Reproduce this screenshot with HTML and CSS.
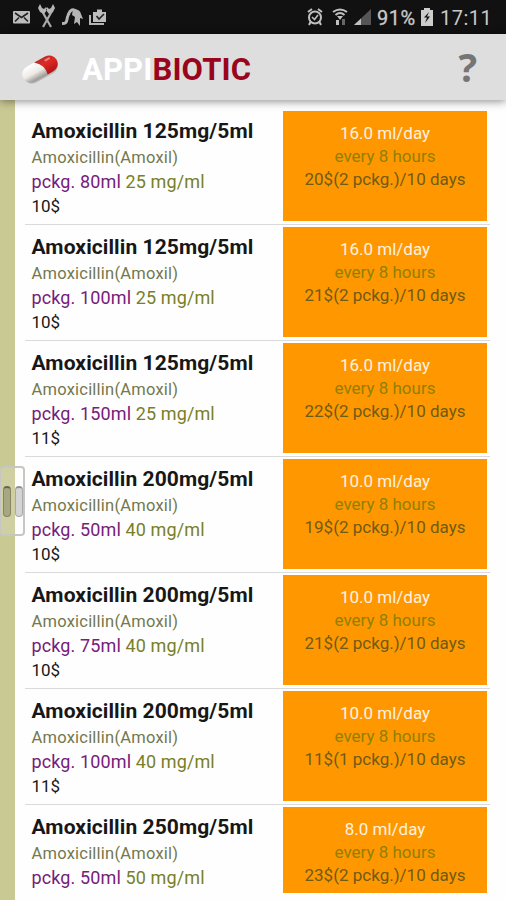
FILE: index.html
```html
<!DOCTYPE html>
<html lang="en">
<head>
<meta charset="utf-8">
<title>Appibiotic</title>
<link rel="stylesheet" href="styles.css">
</head>
<body>
<div class="statusbar">
  <svg class="notices" width="96" height="32" viewBox="0 0 96 32">
    <rect x="1" y="11" width="17" height="12.500" rx="1" fill="#bdbdbd"/>
    <path d="M3 13l6.500 4.500L16 13M3 21.500l4-4M16 21.500l-4-4" fill="none" stroke="#222" stroke-width="1.600"/>
    <path d="M30 11L39 27M40 11L31 27" fill="none" stroke="#aaa" stroke-width="2.200"/>
    <path d="M28 4l-2 4 2 4 4 2 3-4-1-3-2 2-2-1zM41 4l2 4-2 4-4 2-3-4 1-3 2 2 2-1z" fill="#b5b5b5"/>
    <path d="M50 23.500c6 0 4-3 6-8 2-6 6-8 8-3" fill="none" stroke="#b5b5b5" stroke-width="3"/>
    <path d="M61 9q7 0 8 5l2 5-3-1v8l-3-4-3 2 1-7-3-2z" fill="#b5b5b5"/>
    <path d="M78 15v9h14" fill="none" stroke="#b5b5b5" stroke-width="2"/>
    <path d="M81 12h4V9.500h5V12h4v10H81z" fill="#bdbdbd"/>
    <path d="M84.500 16l2.500 3 5-5" fill="none" stroke="#222" stroke-width="1.600"/>
  </svg>
  <svg class="signals" width="66" height="32" viewBox="0 0 66 32">
    <g fill="none" stroke="#c0c0c0">
      <circle cx="9" cy="17.500" r="6" stroke-width="2"/>
      <path d="M2 12l4-3M16 12l-4-3M4.500 22L3 25M13.500 22l1.500 3" stroke-width="2"/>
      <path d="M6 17l2.500 2.500L12 15" stroke-width="1.600"/>
      <path d="M27 12q7-5 14 0M29.500 15q4.500-4 9 0" stroke-width="2"/>
    </g>
    <path d="M31 16h6l-3 4zM30 20h3v5h-3z" fill="#c0c0c0"/>
    <path d="M36 19h3v6h-3z" fill="#666"/>
    <path d="M65 9v16H48z" fill="#555"/>
    <path d="M55 18.500V25h-7z" fill="#c0c0c0"/>
  </svg>
  <span class="percent">91%</span>
  <svg class="battery" width="12" height="18" viewBox="0 0 12 18">
    <path d="M0 2h3V0h6v2h3v16H0z" fill="#cdcdcd"/>
    <path d="M8 4L3 9.500h3L4 15l5-6.500H6z" fill="#111"/>
  </svg>
  <span class="clock">17:11</span>
</div>
<header class="appbar">
  <svg class="pill" width="40" height="34" viewBox="0 0 40 34">
    <defs>
      <linearGradient id="white" x1="0" y1="0" x2="0" y2="1"><stop offset="0" stop-color="#fff"/><stop offset=".55" stop-color="#eeeae5"/><stop offset="1" stop-color="#969390"/></linearGradient>
      <linearGradient id="red" x1="0" y1="0" x2="0" y2="1"><stop offset="0" stop-color="#b52e2b"/><stop offset=".35" stop-color="#df2925"/><stop offset="1" stop-color="#b51212"/></linearGradient>
    </defs>
    <g transform="rotate(-29 20 17)">
      <rect x="1.500" y="9.500" width="37" height="17.500" rx="8.700" fill="#777" opacity=".4"/>
      <path d="M24 8.500H9.500a8.500 8.500 0 0 0 0 17H24z" fill="url(#white)"/>
      <path d="M18 8.500h12.500a8.500 8.500 0 0 1 0 17H24q3-9-6-17z" fill="url(#red)"/>
      <path d="M29 12h4" stroke="#f78079" stroke-width="2" stroke-linecap="round"/>
    </g>
  </svg>
  <h1 class="brand"><span class="brand-light">APPI</span>BIOTIC</h1>
  <span class="help">?</span>
</header>
<div class="content">
  <aside class="rail"><div class="handle"><i class="grip"></i><i class="grip grip-light"></i></div></aside>
  <main class="list">
    <article class="row"><div class="drug"><h2>Amoxicillin 125mg/5ml</h2><p class="generic">Amoxicillin(Amoxil)</p><p class="pack">pckg. 80ml <span class="strength">25 mg/ml</span></p><p class="price">10$</p></div><div class="dose"><p class="volume">16.0 ml/day</p><p class="interval">every 8 hours</p><p class="course">20$(2 pckg.)/10 days</p></div></article>
    <article class="row"><div class="drug"><h2>Amoxicillin 125mg/5ml</h2><p class="generic">Amoxicillin(Amoxil)</p><p class="pack">pckg. 100ml <span class="strength">25 mg/ml</span></p><p class="price">10$</p></div><div class="dose"><p class="volume">16.0 ml/day</p><p class="interval">every 8 hours</p><p class="course">21$(2 pckg.)/10 days</p></div></article>
    <article class="row"><div class="drug"><h2>Amoxicillin 125mg/5ml</h2><p class="generic">Amoxicillin(Amoxil)</p><p class="pack">pckg. 150ml <span class="strength">25 mg/ml</span></p><p class="price">11$</p></div><div class="dose"><p class="volume">16.0 ml/day</p><p class="interval">every 8 hours</p><p class="course">22$(2 pckg.)/10 days</p></div></article>
    <article class="row"><div class="drug"><h2>Amoxicillin 200mg/5ml</h2><p class="generic">Amoxicillin(Amoxil)</p><p class="pack">pckg. 50ml <span class="strength">40 mg/ml</span></p><p class="price">10$</p></div><div class="dose"><p class="volume">10.0 ml/day</p><p class="interval">every 8 hours</p><p class="course">19$(2 pckg.)/10 days</p></div></article>
    <article class="row"><div class="drug"><h2>Amoxicillin 200mg/5ml</h2><p class="generic">Amoxicillin(Amoxil)</p><p class="pack">pckg. 75ml <span class="strength">40 mg/ml</span></p><p class="price">10$</p></div><div class="dose"><p class="volume">10.0 ml/day</p><p class="interval">every 8 hours</p><p class="course">21$(2 pckg.)/10 days</p></div></article>
    <article class="row"><div class="drug"><h2>Amoxicillin 200mg/5ml</h2><p class="generic">Amoxicillin(Amoxil)</p><p class="pack">pckg. 100ml <span class="strength">40 mg/ml</span></p><p class="price">11$</p></div><div class="dose"><p class="volume">10.0 ml/day</p><p class="interval">every 8 hours</p><p class="course">11$(1 pckg.)/10 days</p></div></article>
    <article class="row row-last"><div class="drug"><h2>Amoxicillin 250mg/5ml</h2><p class="generic">Amoxicillin(Amoxil)</p><p class="pack">pckg. 50ml <span class="strength">50 mg/ml</span></p></div><div class="dose"><p class="volume">8.0 ml/day</p><p class="interval">every 8 hours</p><p class="course">23$(2 pckg.)/10 days</p></div></article>
  </main>
</div>
</body>
</html>
```
FILE: styles.css
```css
* { box-sizing: border-box; }
body { margin: 0; height: 900px; overflow: hidden; background: #fefefe; font-family: Roboto, sans-serif; color: #171717; display: flex; flex-direction: column; }
h1, h2, p { margin: 0; }
.statusbar { height: 34px; flex: none; background: #111; display: flex; align-items: flex-start; padding-left: 12px; color: #c9c9c9; font-size: 20px; line-height: 36px; }
.signals { margin-left: 198px; }
.percent { width: 40px; margin-left: 5px; white-space: nowrap; letter-spacing: .5px; -webkit-text-stroke: .3px #c9c9c9; }
.battery { margin: 8px 7px 0 4px; }
.clock { letter-spacing: .5px; }
.appbar { height: 66px; flex: none; background: #dedede; display: flex; align-items: center; padding: 3px 29px 0 20px; box-shadow: 0 1px 9px rgba(0,0,0,.48); z-index: 1; }
.brand { margin: 2px 0 0 22px; font-size: 31px; line-height: 36px; font-weight: 700; letter-spacing: .15px; color: #98051c; }
.brand-light { color: #fff; }
.help { margin: -3px 0 0 auto; font: 700 39px/44px "Open Sans", sans-serif; color: #757575; }
.content { flex: 1; min-height: 0; display: flex; }
.rail { width: 15px; flex: none; background: #c9c994; position: relative; }
.handle { position: absolute; left: 0; top: 366px; width: 25px; height: 70px; border: 2px solid #c6c6c3; border-left-width: 1px; border-radius: 4px; display: flex; align-items: center; gap: 4px; padding-left: 2px; background: rgba(255,255,255,.12); }
.grip { width: 8px; height: 31px; border: 1px solid #858568; border-top: 2px solid #656550; border-radius: 4px; background: #a8a880; }
.grip-light { border-color: #909090 #aaa #aaa; background: #d4d4d4; }
.list { flex: 1; padding: 9px 16px 0 10px; }
.row { height: 116px; display: flex; justify-content: space-between; padding: 2px 3px 0 6px; border-bottom: 1.500px solid #dadada; }
.row-last { border-bottom: 0; }
.row-last .dose { height: 86px; }
.drug { padding: 5px 0 0 .5px; white-space: nowrap; }
h2 { font-size: 21px; line-height: 30px; font-weight: 700; letter-spacing: .09px; }
.generic { font-size: 16.500px; line-height: 24px; letter-spacing: .22px; color: #73784d; }
.pack { font-size: 18px; line-height: 24px; letter-spacing: .12px; color: #762079; }
.strength { color: #788027; }
.price { font-size: 17px; line-height: 25px; }
.dose { width: 204px; height: 110px; background: #ff9800; text-align: center; padding-top: 11px; font-size: 17px; line-height: 23px; white-space: nowrap; }
.volume { color: #fff2e2; }
.interval { color: #908000; }
.course { color: #705b17; }
```
